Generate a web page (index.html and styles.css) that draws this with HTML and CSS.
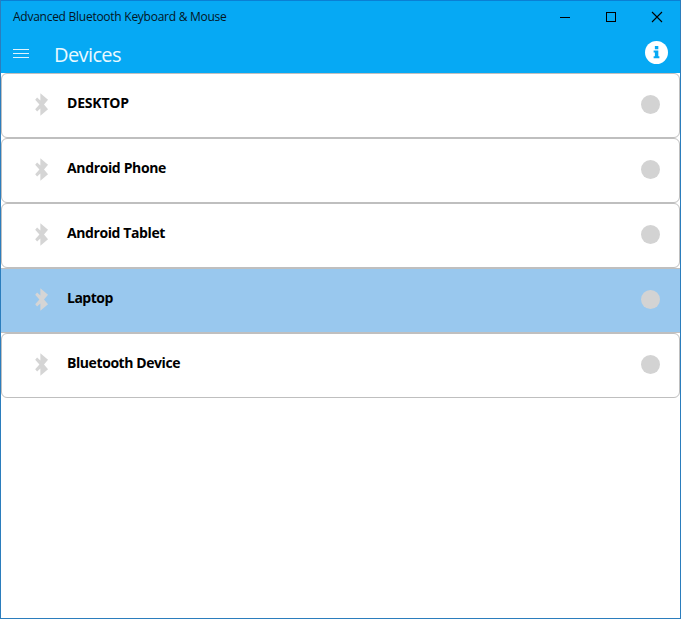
FILE: index.html
```html
<!DOCTYPE html>
<html lang="en">
<head>
<meta charset="utf-8">
<title>Advanced Bluetooth Keyboard &amp; Mouse</title>
<link rel="stylesheet" href="styles.css">
</head>
<body>
<svg width="0" height="0" class="defs" aria-hidden="true">
  <symbol id="bt" viewBox="0 0 14 24"><path d="M5.3 .2 13.3 7 9.1 12l4.2 5L5.3 23.8v-7.6L1.9 19.4 -.1 17 4.3 12 -.1 7 1.9 4.6 5.3 7.8z" fill="currentColor"/></symbol>
</svg>
<div class="window">
  <header class="top">
    <div class="titlebar">
      <span class="caption">Advanced Bluetooth Keyboard &amp; Mouse</span>
      <div class="controls">
        <svg viewBox="0 0 46 32"><path d="M18 16.5h10"/></svg>
        <svg viewBox="0 0 46 32"><path d="M18.5 11.5h9v9h-9z"/></svg>
        <svg viewBox="0 0 46 32" class="close"><path d="M18 11l10 10M28 11 18 21"/></svg>
      </div>
    </div>
    <nav class="appbar">
      <svg class="menu" viewBox="0 0 16 11"><path d="M0 1.5h16M0 5.5h16M0 9.5h16"/></svg>
      <h1>Devices</h1>
      <svg class="info" viewBox="0 0 24 24"><circle cx="12" cy="12" r="12"/><path d="M10.3 5.2h3.6v3.3h-3.6zM9 9.8h4.9v6.1H15V18H9v-2.1h1.3v-4H9z"/></svg>
    </nav>
  </header>
  <main>
    <div class="row"><svg class="bt"><use href="#bt"/></svg><span class="name desktop">DESKTOP</span><i class="dot"></i></div>
    <div class="row"><svg class="bt"><use href="#bt"/></svg><span class="name phone">Android Phone</span><i class="dot"></i></div>
    <div class="row"><svg class="bt"><use href="#bt"/></svg><span class="name tablet">Android Tablet</span><i class="dot"></i></div>
    <div class="row selected"><svg class="bt"><use href="#bt"/></svg><span class="name laptop">Laptop</span><i class="dot"></i></div>
    <div class="row"><svg class="bt"><use href="#bt"/></svg><span class="name device">Bluetooth Device</span><i class="dot"></i></div>
  </main>
</div>
</body>
</html>
```
FILE: styles.css
```css
* { box-sizing: border-box; }
body { margin: 0; background: #fff; font-family: "Open Sans", "Noto Sans", sans-serif; }
.defs { position: absolute; }
.window { width: 681px; height: 619px; border: 1px solid #2b7dbd; background: #fff; }
.top { height: 73px; margin: -1px 0 0; background: #06a9f4; border-top: 1px solid #0a7fd4; }
.titlebar { display: flex; justify-content: space-between; height: 32px; }
.caption { padding-left: 12px; font-size: 12px; line-height: 32px; letter-spacing: -0.26px; color: #04151f; white-space: nowrap; }
.controls { display: flex; }
.controls svg { width: 46px; height: 32px; fill: none; stroke: #000; stroke-width: 1; shape-rendering: crispEdges; }
.controls .close { shape-rendering: auto; stroke-width: 1.1; }
.appbar { display: flex; align-items: center; height: 40px; padding: 0 12px; }
.menu { width: 16px; height: 11px; stroke: #dff4fe; stroke-width: 1; shape-rendering: crispEdges; }
h1 { flex: 1; margin: 3px 0 0 25px; font-size: 20px; line-height: 27px; letter-spacing: -0.6px; font-weight: 400; color: #e9f9ff; }
.info { width: 23px; height: 23px; margin-top: -1px; fill: #fff; }
.info path { fill: #06a9f4; }
.row { display: flex; align-items: center; height: 65px; padding: 0 19px 0 33px; border: 1px solid #bfbfbf; border-radius: 6px; background: #fff; }
.row.selected { border-width: 1px 0; border-radius: 0; padding: 0 20px 0 34px; background: #99c8ee; }
.bt { width: 14px; height: 23px; margin-top: -3px; color: #d5d5d5; }
.name { flex: 1; margin: -6px 0 0 18px; font-size: 14px; line-height: 20px; letter-spacing: -0.36px; font-weight: 700; color: #000; white-space: nowrap; }
.name.desktop { letter-spacing: -0.2px; }
.name.laptop { letter-spacing: -0.5px; }
.name.device { letter-spacing: -0.42px; }
.name.tablet { letter-spacing: -0.4px; }
.dot { width: 19px; height: 19px; margin-top: -2px; border-radius: 50%; background: #d3d3d3; }
```
